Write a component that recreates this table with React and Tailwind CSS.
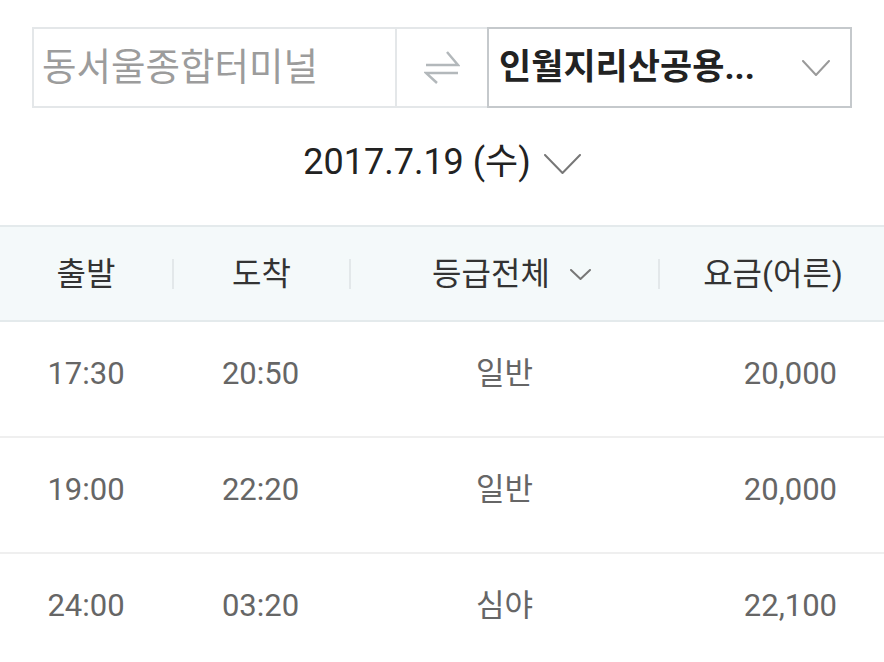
import React from 'react'

const FONT = { fontFamily: 'Roboto, "Noto Sans CJK KR", sans-serif' }

const ROWS = [
  { dep: '17:30', arr: '20:50', grade: '일반', fare: '20,000' },
  { dep: '19:00', arr: '22:20', grade: '일반', fare: '20,000' },
  { dep: '24:00', arr: '03:20', grade: '심야', fare: '22,100' },
]

function Chevron({ w, h, color, sw = 2 }) {
  return (
    <svg width={w} height={h} viewBox={`0 0 ${w} ${h}`} fill="none">
      <polyline
        points={`1,1 ${w / 2},${h - 1} ${w - 1},1`}
        stroke={color}
        strokeWidth={sw}
        strokeLinecap="round"
        strokeLinejoin="round"
      />
    </svg>
  )
}

function SwapIcon() {
  return (
    <svg width="36" height="36" viewBox="0 0 36 36" fill="none">
      <path d="M2 15 H34 L23 2" stroke="#b3b8bb" strokeWidth="2.5" strokeLinejoin="miter" />
      <path d="M34 23 H2 L13 33" stroke="#b3b8bb" strokeWidth="2.5" strokeLinejoin="miter" />
    </svg>
  )
}

const Sep = () => <div className="w-[2px] h-[30px] bg-[#e3e8ea] shrink-0" />

export default function App() {
  return (
    <div className="w-[884px] h-[662px] bg-white overflow-hidden" style={FONT}>
      {/* Route selector */}
      <div className="pt-[27px] px-[32px]">
        <div className="flex h-[81px]">
          <div className="w-[365px] border-2 border-[#e4e7e9] flex items-center pl-[8px]">
            <span className="text-[37.5px] text-[#9c9c9c] leading-none">동서울종합터미널</span>
          </div>
          <div className="w-[90px] border-y-2 border-[#e4e7e9] flex items-center justify-center">
            <SwapIcon />
          </div>
          <div className="flex-1 border-2 border-[#c5c9cc] flex items-center justify-between pl-[10px] pr-[20px]">
            <span className="text-[35px] font-bold text-[#222] leading-none">인월지리산공용...</span>
            <Chevron w={28} h={16} color="#9a9a9a" />
          </div>
        </div>
      </div>

      {/* Date */}
      <div className="mt-[34px] flex items-center justify-center h-[40px]">
        <span className="text-[36px] text-[#222] leading-[40px]">2017.7.19 (수)</span>
        <span className="ml-[13px] mt-[4px]">
          <Chevron w={37} h={20} color="#777" />
        </span>
      </div>

      {/* Table header */}
      <div className="mt-[43px] h-[97px] border-y-2 border-[#e4eaec] bg-[#f4f9fa] flex items-center text-[32px] text-[#333]">
        <div className="w-[172px] text-center">출발</div>
        <Sep />
        <div className="w-[175px] text-center">도착</div>
        <Sep />
        <div className="w-[307px] flex items-center justify-center pl-[14px]">
          <span>등급전체</span>
          <span className="ml-[20px] mt-[2px]">
            <Chevron w={21} h={11} color="#777" />
          </span>
        </div>
        <Sep />
        <div className="flex-1 text-right pr-[41px]">요금(어른)</div>
      </div>

      {/* Rows */}
      {ROWS.map((r, i) => (
        <div
          key={i}
          className="grid grid-cols-[172px_177px_311px_1fr] items-center h-[116px] border-b-2 border-[#efefef] pb-[9px] text-[31px] text-[#666]"
        >
          <div className="text-center">{r.dep}</div>
          <div className="text-center">{r.arr}</div>
          <div className="text-center">{r.grade}</div>
          <div className="text-right pr-[47px]">{r.fare}</div>
        </div>
      ))}
    </div>
  )
}
